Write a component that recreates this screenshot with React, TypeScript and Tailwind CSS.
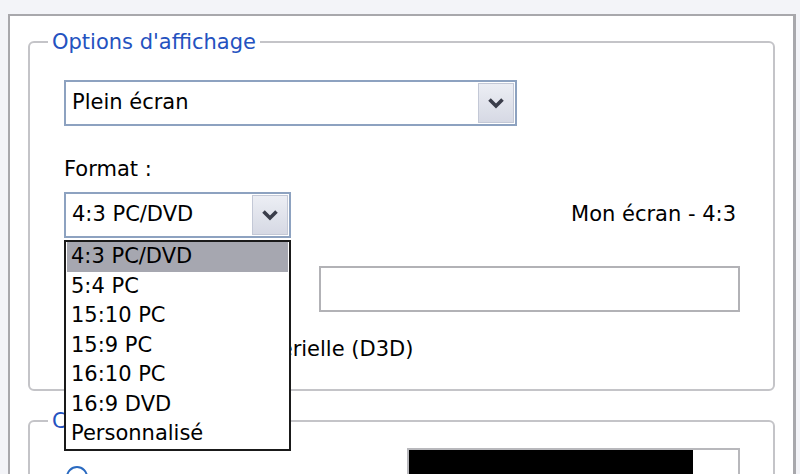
import React from 'react'

const font = { fontFamily: '"DejaVu Sans", Verdana, sans-serif' }

const formats = ['4:3 PC/DVD', '5:4 PC', '15:10 PC', '15:9 PC', '16:10 PC', '16:9 DVD', 'Personnalisé']

function Chevron() {
  return (
    <svg width="20" height="14" viewBox="0 0 20 14">
      <path d="M3.5 3.5 L10 10 L16.5 3.5" fill="none" stroke="#3a3d4a" strokeWidth="3.6" strokeLinejoin="miter" />
    </svg>
  )
}

function Combo({ value, width }: { value: string; width: string }) {
  return (
    <div className={`flex h-[46px] ${width} border-2 border-[#8da2c0] bg-white`}>
      <div className="flex flex-1 items-center pl-[6px] text-[21px] text-black">{value}</div>
      <div className="m-[1px] flex w-[36px] items-center justify-center border border-[#c3c8d6] bg-gradient-to-b from-[#eceef4] to-[#d6d9e4]">
        <Chevron />
      </div>
    </div>
  )
}

export default function App() {
  return (
    <div className="h-[474px] w-[800px] overflow-hidden bg-[#f3f4f8] pl-[8px] pt-[14px]" style={font}>
      <div className="relative h-[480px] w-[788px] border-2 border-r-[3px] border-[#a8a8ac] bg-white">
        <fieldset className="ml-[18px] mr-[18px] mt-[14px] rounded-[6px] border-2 border-[#c4c4c8] pb-[27px] pl-[34px] pr-[33px]">
          <legend className="-ml-[16px] px-[4px] text-[21px] leading-[24px] text-[#2452c0]">Options d'affichage</legend>
          <div className="pt-[26px]">
            <Combo value="Plein écran" width="w-[453px]" />
          </div>
          <div className="mt-[31px] text-[21px] leading-[24px] text-black">Format :</div>
          <div className="mt-[11px] flex items-center justify-between">
            <Combo value="4:3 PC/DVD" width="w-[227px]" />
            <span className="pr-[4px] text-[21px] text-black">Mon écran - 4:3</span>
          </div>
          <div className="mt-[28px] flex items-center justify-end">
            <div className="h-[46px] w-[421px] border-2 border-[#b2b2b6] bg-white" />
          </div>
          <label className="mt-[24px] flex items-center gap-[10px] text-[21px] leading-[26px] text-black">
            <span className="h-[22px] w-[22px] border-2 border-[#1c5180] bg-white" />
            <span className="pl-[5px]">Accélération matérielle (D3D)</span>
          </label>
        </fieldset>

        <fieldset className="ml-[18px] mr-[18px] mt-[18px] h-[120px] rounded-[6px] border-2 border-[#c4c4c8] pl-[36px] pr-[33px]">
          <legend className="-ml-[18px] px-[4px] text-[21px] leading-[24px] text-[#2452c0]">Couleurs</legend>
          <div className="mt-[15px] flex items-start">
            <span className="mt-[18px] h-[22px] w-[22px] rounded-full border-2 border-[#2a6ac0] bg-white" />
            <div className="ml-auto flex h-[46px] w-[333px] border-2 border-[#b8b8bc]">
              <div className="flex-1 bg-black" />
              <div className="w-[45px] bg-white" />
            </div>
          </div>
        </fieldset>

        <ul className="absolute left-[54px] top-[224px] w-[227px] border-2 border-[#1a1a1a] bg-white text-[21px] text-black">
          {formats.map((f, i) => (
            <li
              key={f}
              className={`mx-[1px] flex h-[29.5px] items-center pl-[4px] ${i === 0 ? 'bg-[#a6a7b0]' : ''}`}
            >
              {f}
            </li>
          ))}
        </ul>
      </div>
    </div>
  )
}
